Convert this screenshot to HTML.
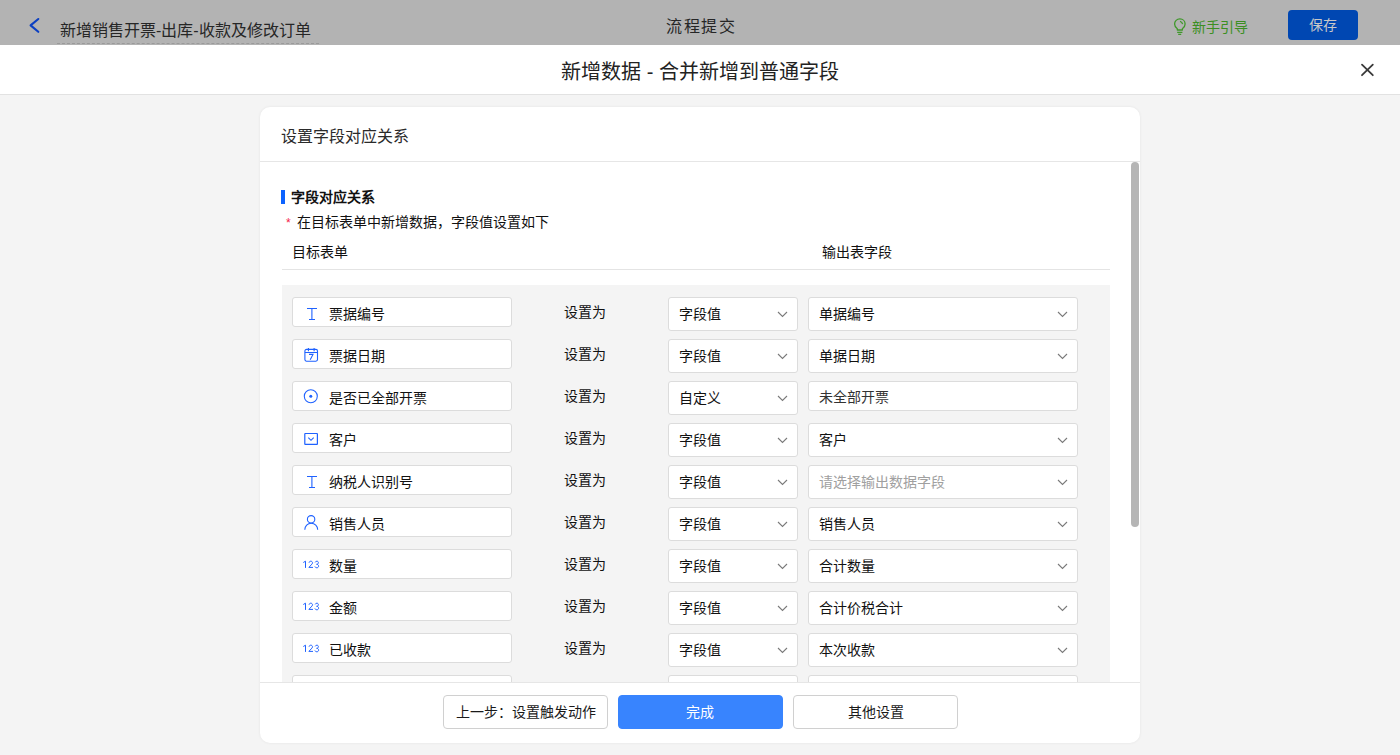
<!DOCTYPE html>
<html lang="zh-CN"><head><meta charset="utf-8">
<style>
*{margin:0;padding:0;box-sizing:border-box}
html,body{width:1400px;height:755px;overflow:hidden;background:#f4f4f4;font-family:"Liberation Sans",sans-serif;color:#333}
.a{position:absolute;white-space:nowrap}
#top{position:absolute;left:0;top:0;width:1400px;height:45px;background:#b3b3b3}
#mh{position:absolute;left:0;top:45px;width:1400px;height:50px;background:#fff;border-bottom:1px solid #e2e2e2}
#card{position:absolute;left:260px;top:107px;width:880px;height:636px;background:#fff;border-radius:10px;overflow:hidden;box-shadow:0 0 3px rgba(0,0,0,0.07)}
.inp{position:absolute;background:#fff;border:1px solid #dcdcdc;border-radius:3px;height:30px}
.sel{position:absolute;background:#fff;border:1px solid #dcdcdc;border-radius:3px;height:34px}
.t14{font-size:14px;line-height:16px}
.btn{position:absolute;top:695px;height:34px;width:165px;border:1px solid #d0d0d0;border-radius:4px;background:#fff;font-size:14px;line-height:32px;text-align:center;color:#1a1a1a}
</style></head><body>
<div id="top">
  <svg class="a" style="left:28px;top:17px" width="14" height="18" viewBox="0 0 14 18"><path d="M10.3 2 L2.6 8.4 L10.3 14.8" fill="none" stroke="#0b3fc2" stroke-width="2.1" stroke-linecap="round" stroke-linejoin="round"/></svg>
  <div class="a" style="left:60px;top:21px;font-size:16px;line-height:20px;color:#262626">新增销售开票-出库-收款及修改订单</div>
  <div class="a" style="left:57px;top:43px;width:262px;border-top:1px dashed #9a9a9a"></div>
  <div class="a" style="left:666px;top:17px;font-size:16px;line-height:20px;letter-spacing:1.5px;color:#262626">流程提交</div>
  <svg class="a" style="left:1172px;top:18px" width="15" height="18" viewBox="0 0 15 18"><path d="M5.3 12 L5.3 10.8 C3.6 9.6 2.6 7.9 2.6 6 C2.6 3.1 4.9 0.9 7.85 0.9 C10.8 0.9 13.1 3.1 13.1 6 C13.1 7.9 12.1 9.6 10.4 10.8 L10.4 12 Z M5.2 14.4 H10.4 M6.2 16.3 H9.2" fill="none" stroke="#3f982a" stroke-width="1.3" stroke-linejoin="round"/><path d="M8 3.3 C9.3 3.6 10.3 4.6 10.6 6.2" fill="none" stroke="#3f982a" stroke-width="1.3"/></svg>
  <div class="a" style="left:1192px;top:18px;font-size:14px;line-height:18px;color:#3b8f22">新手引导</div>
  <div class="a" style="left:1288px;top:10px;width:70px;height:30px;background:#0047b2;border-radius:4px;color:#c8c8c8;font-size:14px;line-height:30px;text-align:center">保存</div>
</div>
<div id="mh">
  <div class="a" style="left:0;width:1400px;top:15px;text-align:center;font-size:20px;line-height:24px;color:#222">新增数据 - 合并新增到普通字段</div>
  <svg class="a" style="left:1359px;top:16px" width="18" height="18" viewBox="0 0 18 18"><path d="M3 3.6 L13.8 14.2 M13.8 3.6 L3 14.2" stroke="#3a3a3a" stroke-width="1.8" stroke-linecap="round"/></svg>
</div>
<div id="card">
  <div class="a" style="left:21px;top:21px;font-size:16px;line-height:18px;color:#2a2a2a">设置字段对应关系</div>
  <div class="a" style="left:0;top:54px;width:880px;border-top:1px solid #e6e6e6"></div>
  <div class="a" style="left:871px;top:55px;width:8px;height:365px;background:#b5b5b5;border-radius:4px"></div>
</div>
<div class="a" style="left:0;top:0;width:1400px;height:682px;overflow:hidden">
<div class="a" style="left:282px;top:285px;width:828px;height:420px;background:#f4f4f4"></div>
<div class="inp" style="left:292px;top:297px;width:220px"></div>
<svg class="a" style="left:300px;top:302px" width="22" height="22" viewBox="0 0 22 22"><path d="M7 6.5 H17 M11.9 6.5 V17.3 M9 17.5 H15" stroke="#1f62ff" stroke-width="1.1" fill="none"/></svg>
<div class="a t14" style="left:329px;top:306px;color:#111">票据编号</div>
<div class="a t14" style="left:564px;top:304px;color:#111">设置为</div>
<div class="sel" style="left:668px;top:297px;width:130px"></div>
<div class="a t14" style="left:679px;top:306px;color:#111">字段值</div>
<svg class="a" style="left:777px;top:311px" width="11" height="7" viewBox="0 0 11 7"><path d="M1 1 L5.5 5.5 L10 1" stroke="#7a7a7a" stroke-width="1.1" fill="none"/></svg>
<div class="sel" style="left:808px;top:297px;width:270px"></div>
<svg class="a" style="left:1057px;top:311px" width="11" height="7" viewBox="0 0 11 7"><path d="M1 1 L5.5 5.5 L10 1" stroke="#7a7a7a" stroke-width="1.1" fill="none"/></svg>
<div class="a t14" style="left:819px;top:306px;color:#111">单据编号</div>
<div class="inp" style="left:292px;top:339px;width:220px"></div>
<svg class="a" style="left:300px;top:344px" width="22" height="22" viewBox="0 0 22 22"><rect x="4.9" y="5.4" width="12.6" height="11.8" rx="1.6" fill="none" stroke="#1f62ff" stroke-width="1.1"/><path d="M4.9 8.5 H17.5 M8.4 4 V7.2 M14.1 4 V7.2 M9 10.4 H13 L10.2 15.8" stroke="#1f62ff" stroke-width="1.1" fill="none"/></svg>
<div class="a t14" style="left:329px;top:348px;color:#111">票据日期</div>
<div class="a t14" style="left:564px;top:346px;color:#111">设置为</div>
<div class="sel" style="left:668px;top:339px;width:130px"></div>
<div class="a t14" style="left:679px;top:348px;color:#111">字段值</div>
<svg class="a" style="left:777px;top:353px" width="11" height="7" viewBox="0 0 11 7"><path d="M1 1 L5.5 5.5 L10 1" stroke="#7a7a7a" stroke-width="1.1" fill="none"/></svg>
<div class="sel" style="left:808px;top:339px;width:270px"></div>
<svg class="a" style="left:1057px;top:353px" width="11" height="7" viewBox="0 0 11 7"><path d="M1 1 L5.5 5.5 L10 1" stroke="#7a7a7a" stroke-width="1.1" fill="none"/></svg>
<div class="a t14" style="left:819px;top:348px;color:#111">单据日期</div>
<div class="inp" style="left:292px;top:381px;width:220px"></div>
<svg class="a" style="left:300px;top:386px" width="22" height="22" viewBox="0 0 22 22"><circle cx="10.8" cy="10.2" r="6.5" fill="none" stroke="#1f62ff" stroke-width="1.1"/><circle cx="10.8" cy="10.2" r="1.5" fill="#1f62ff"/></svg>
<div class="a t14" style="left:329px;top:390px;color:#111">是否已全部开票</div>
<div class="a t14" style="left:564px;top:388px;color:#111">设置为</div>
<div class="sel" style="left:668px;top:381px;width:130px"></div>
<div class="a t14" style="left:679px;top:390px;color:#111">自定义</div>
<svg class="a" style="left:777px;top:395px" width="11" height="7" viewBox="0 0 11 7"><path d="M1 1 L5.5 5.5 L10 1" stroke="#7a7a7a" stroke-width="1.1" fill="none"/></svg>
<div class="inp" style="left:808px;top:381px;width:270px"></div>
<div class="a t14" style="left:819px;top:389px;color:#333">未全部开票</div>
<div class="inp" style="left:292px;top:423px;width:220px"></div>
<svg class="a" style="left:300px;top:428px" width="22" height="22" viewBox="0 0 22 22"><rect x="4.8" y="5.5" width="12.6" height="10.9" rx="0.5" fill="none" stroke="#1f62ff" stroke-width="1.2"/><path d="M8.3 9.6 L11 12.3 L13.7 9.6" stroke="#1f62ff" stroke-width="1.1" fill="none"/></svg>
<div class="a t14" style="left:329px;top:432px;color:#111">客户</div>
<div class="a t14" style="left:564px;top:430px;color:#111">设置为</div>
<div class="sel" style="left:668px;top:423px;width:130px"></div>
<div class="a t14" style="left:679px;top:432px;color:#111">字段值</div>
<svg class="a" style="left:777px;top:437px" width="11" height="7" viewBox="0 0 11 7"><path d="M1 1 L5.5 5.5 L10 1" stroke="#7a7a7a" stroke-width="1.1" fill="none"/></svg>
<div class="sel" style="left:808px;top:423px;width:270px"></div>
<svg class="a" style="left:1057px;top:437px" width="11" height="7" viewBox="0 0 11 7"><path d="M1 1 L5.5 5.5 L10 1" stroke="#7a7a7a" stroke-width="1.1" fill="none"/></svg>
<div class="a t14" style="left:819px;top:432px;color:#111">客户</div>
<div class="inp" style="left:292px;top:465px;width:220px"></div>
<svg class="a" style="left:300px;top:470px" width="22" height="22" viewBox="0 0 22 22"><path d="M7 6.5 H17 M11.9 6.5 V17.3 M9 17.5 H15" stroke="#1f62ff" stroke-width="1.1" fill="none"/></svg>
<div class="a t14" style="left:329px;top:474px;color:#111">纳税人识别号</div>
<div class="a t14" style="left:564px;top:472px;color:#111">设置为</div>
<div class="sel" style="left:668px;top:465px;width:130px"></div>
<div class="a t14" style="left:679px;top:474px;color:#111">字段值</div>
<svg class="a" style="left:777px;top:479px" width="11" height="7" viewBox="0 0 11 7"><path d="M1 1 L5.5 5.5 L10 1" stroke="#7a7a7a" stroke-width="1.1" fill="none"/></svg>
<div class="sel" style="left:808px;top:465px;width:270px"></div>
<svg class="a" style="left:1057px;top:479px" width="11" height="7" viewBox="0 0 11 7"><path d="M1 1 L5.5 5.5 L10 1" stroke="#7a7a7a" stroke-width="1.1" fill="none"/></svg>
<div class="a t14" style="left:819px;top:474px;color:#a0a0a0">请选择输出数据字段</div>
<div class="inp" style="left:292px;top:507px;width:220px"></div>
<svg class="a" style="left:300px;top:512px" width="22" height="22" viewBox="0 0 22 22"><circle cx="11.1" cy="7.35" r="3.7" fill="none" stroke="#1f62ff" stroke-width="1.1"/><path d="M4.8 17.7 C4.8 14.1 7.6 11.3 11.2 11.3 C14.8 11.3 17.7 14.1 17.7 17.7" fill="none" stroke="#1f62ff" stroke-width="1.1"/></svg>
<div class="a t14" style="left:329px;top:516px;color:#111">销售人员</div>
<div class="a t14" style="left:564px;top:514px;color:#111">设置为</div>
<div class="sel" style="left:668px;top:507px;width:130px"></div>
<div class="a t14" style="left:679px;top:516px;color:#111">字段值</div>
<svg class="a" style="left:777px;top:521px" width="11" height="7" viewBox="0 0 11 7"><path d="M1 1 L5.5 5.5 L10 1" stroke="#7a7a7a" stroke-width="1.1" fill="none"/></svg>
<div class="sel" style="left:808px;top:507px;width:270px"></div>
<svg class="a" style="left:1057px;top:521px" width="11" height="7" viewBox="0 0 11 7"><path d="M1 1 L5.5 5.5 L10 1" stroke="#7a7a7a" stroke-width="1.1" fill="none"/></svg>
<div class="a t14" style="left:819px;top:516px;color:#111">销售人员</div>
<div class="inp" style="left:292px;top:549px;width:220px"></div>
<svg class="a" style="left:300px;top:557px" width="22" height="14" viewBox="0 0 22 14"><path d="M3.3 5.5 L5.5 4.2 V10.9 M9.1 5.7 C9.1 4.8 9.9 4.2 10.8 4.2 C11.8 4.2 12.5 4.9 12.5 5.8 C12.5 6.6 12 7.2 11.2 7.9 L8.9 10.4 H13 M15.2 5.4 C15.4 4.6 16.1 4.2 16.9 4.2 C17.8 4.2 18.4 4.8 18.4 5.7 C18.4 6.6 17.7 7.3 16.6 7.3 C17.8 7.3 18.6 8.1 18.6 9.1 C18.6 10.1 17.8 10.8 16.8 10.8 C15.9 10.8 15.2 10.3 14.9 9.5" fill="none" stroke="#1f62ff" stroke-width="1" stroke-linejoin="round"/></svg>
<div class="a t14" style="left:329px;top:558px;color:#111">数量</div>
<div class="a t14" style="left:564px;top:556px;color:#111">设置为</div>
<div class="sel" style="left:668px;top:549px;width:130px"></div>
<div class="a t14" style="left:679px;top:558px;color:#111">字段值</div>
<svg class="a" style="left:777px;top:563px" width="11" height="7" viewBox="0 0 11 7"><path d="M1 1 L5.5 5.5 L10 1" stroke="#7a7a7a" stroke-width="1.1" fill="none"/></svg>
<div class="sel" style="left:808px;top:549px;width:270px"></div>
<svg class="a" style="left:1057px;top:563px" width="11" height="7" viewBox="0 0 11 7"><path d="M1 1 L5.5 5.5 L10 1" stroke="#7a7a7a" stroke-width="1.1" fill="none"/></svg>
<div class="a t14" style="left:819px;top:558px;color:#111">合计数量</div>
<div class="inp" style="left:292px;top:591px;width:220px"></div>
<svg class="a" style="left:300px;top:599px" width="22" height="14" viewBox="0 0 22 14"><path d="M3.3 5.5 L5.5 4.2 V10.9 M9.1 5.7 C9.1 4.8 9.9 4.2 10.8 4.2 C11.8 4.2 12.5 4.9 12.5 5.8 C12.5 6.6 12 7.2 11.2 7.9 L8.9 10.4 H13 M15.2 5.4 C15.4 4.6 16.1 4.2 16.9 4.2 C17.8 4.2 18.4 4.8 18.4 5.7 C18.4 6.6 17.7 7.3 16.6 7.3 C17.8 7.3 18.6 8.1 18.6 9.1 C18.6 10.1 17.8 10.8 16.8 10.8 C15.9 10.8 15.2 10.3 14.9 9.5" fill="none" stroke="#1f62ff" stroke-width="1" stroke-linejoin="round"/></svg>
<div class="a t14" style="left:329px;top:600px;color:#111">金额</div>
<div class="a t14" style="left:564px;top:598px;color:#111">设置为</div>
<div class="sel" style="left:668px;top:591px;width:130px"></div>
<div class="a t14" style="left:679px;top:600px;color:#111">字段值</div>
<svg class="a" style="left:777px;top:605px" width="11" height="7" viewBox="0 0 11 7"><path d="M1 1 L5.5 5.5 L10 1" stroke="#7a7a7a" stroke-width="1.1" fill="none"/></svg>
<div class="sel" style="left:808px;top:591px;width:270px"></div>
<svg class="a" style="left:1057px;top:605px" width="11" height="7" viewBox="0 0 11 7"><path d="M1 1 L5.5 5.5 L10 1" stroke="#7a7a7a" stroke-width="1.1" fill="none"/></svg>
<div class="a t14" style="left:819px;top:600px;color:#111">合计价税合计</div>
<div class="inp" style="left:292px;top:633px;width:220px"></div>
<svg class="a" style="left:300px;top:641px" width="22" height="14" viewBox="0 0 22 14"><path d="M3.3 5.5 L5.5 4.2 V10.9 M9.1 5.7 C9.1 4.8 9.9 4.2 10.8 4.2 C11.8 4.2 12.5 4.9 12.5 5.8 C12.5 6.6 12 7.2 11.2 7.9 L8.9 10.4 H13 M15.2 5.4 C15.4 4.6 16.1 4.2 16.9 4.2 C17.8 4.2 18.4 4.8 18.4 5.7 C18.4 6.6 17.7 7.3 16.6 7.3 C17.8 7.3 18.6 8.1 18.6 9.1 C18.6 10.1 17.8 10.8 16.8 10.8 C15.9 10.8 15.2 10.3 14.9 9.5" fill="none" stroke="#1f62ff" stroke-width="1" stroke-linejoin="round"/></svg>
<div class="a t14" style="left:329px;top:642px;color:#111">已收款</div>
<div class="a t14" style="left:564px;top:640px;color:#111">设置为</div>
<div class="sel" style="left:668px;top:633px;width:130px"></div>
<div class="a t14" style="left:679px;top:642px;color:#111">字段值</div>
<svg class="a" style="left:777px;top:647px" width="11" height="7" viewBox="0 0 11 7"><path d="M1 1 L5.5 5.5 L10 1" stroke="#7a7a7a" stroke-width="1.1" fill="none"/></svg>
<div class="sel" style="left:808px;top:633px;width:270px"></div>
<svg class="a" style="left:1057px;top:647px" width="11" height="7" viewBox="0 0 11 7"><path d="M1 1 L5.5 5.5 L10 1" stroke="#7a7a7a" stroke-width="1.1" fill="none"/></svg>
<div class="a t14" style="left:819px;top:642px;color:#111">本次收款</div>
<div class="inp" style="left:292px;top:675px;width:220px"></div>
<div class="sel" style="left:668px;top:675px;width:130px"></div>
<div class="sel" style="left:808px;top:675px;width:270px"></div>
</div>
<div class="a" style="left:281px;top:190px;width:4px;height:14px;background:#0d63ff"></div>
<div class="a t14" style="left:291px;top:189px;font-weight:bold;color:#111">字段对应关系</div>
<div class="a" style="left:286px;top:216px;font-size:12px;line-height:14px;color:#f5224a">*</div>
<div class="a t14" style="left:297px;top:214px;color:#111">在目标表单中新增数据，字段值设置如下</div>
<div class="a t14" style="left:292px;top:244px;color:#111">目标表单</div>
<div class="a t14" style="left:822px;top:244px;color:#111">输出表字段</div>
<div class="a" style="left:282px;top:269px;width:828px;border-top:1px solid #e4e4e4"></div>
<div class="a" style="left:260px;top:682px;width:880px;border-top:1px solid #e6e6e6"></div>
<div class="btn" style="left:443px">上一步：设置触发动作</div>
<div class="btn" style="left:618px;background:#3884fe;border-color:#3884fe;color:#fff;padding-right:2px">完成</div>
<div class="btn" style="left:793px">其他设置</div>
</body></html>
